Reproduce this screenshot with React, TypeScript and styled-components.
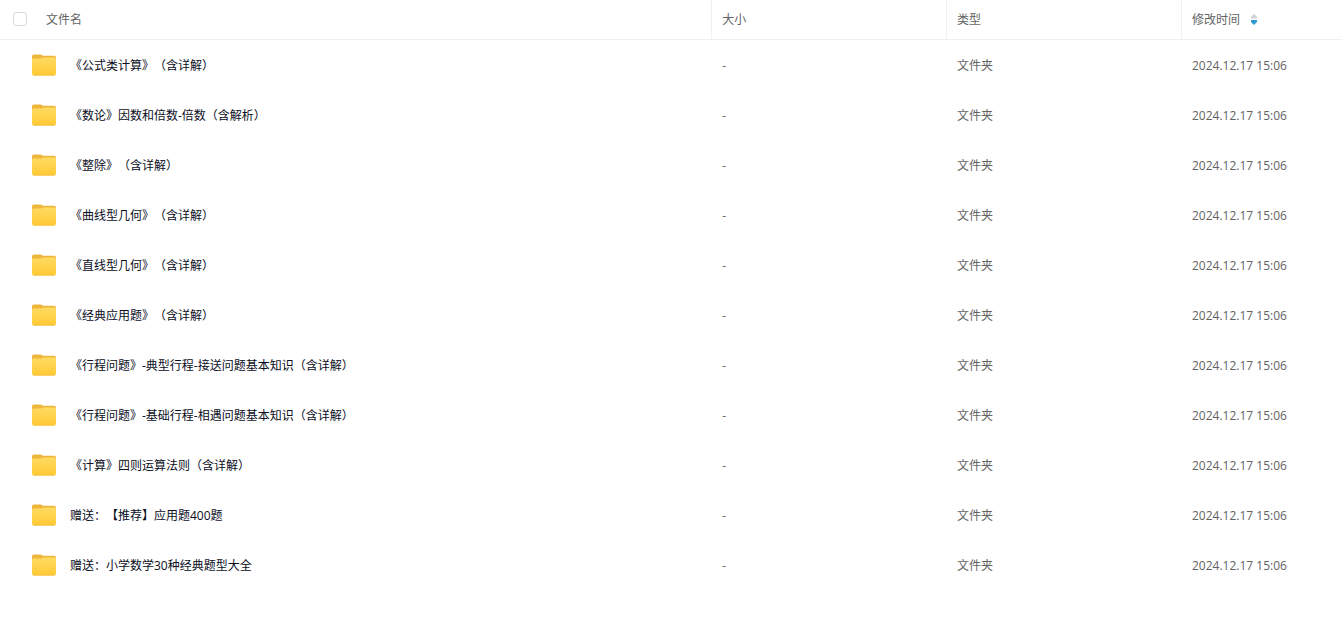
import React from "react";
import styled, { createGlobalStyle } from "styled-components";

const GlobalStyle = createGlobalStyle`
  body {
    margin: 0;
    background: #fff;
    color: #636363;
    font-family: "Open Sans", "Noto Sans CJK SC", sans-serif;
    font-size: 12px;
    line-height: 18px;
    text-spacing-trim: space-all;
  }
`;

const FileTable = styled.table`
  width: 100%;
  table-layout: fixed;
  border-collapse: separate;
  border-spacing: 0;
`;

const Column = styled.col<{ $share: string }>`
  width: ${(p) => p.$share};
`;

const HeadCell = styled.th<{ $first?: boolean }>`
  box-sizing: border-box;
  height: 40px;
  padding: 0 ${(p) => (p.$first ? "12px" : "10px")};
  border-bottom: 1px solid #f0f0f0;
  border-left: ${(p) => (p.$first ? "0" : "1px solid #f0f0f0")};
  font-weight: 400;
  text-align: left;
  white-space: nowrap;
`;

const HeadContent = styled.div`
  display: flex;
  align-items: center;
`;

const Tick = styled.input`
  appearance: none;
  box-sizing: border-box;
  width: 14px;
  height: 14px;
  margin: 0 19px 1px 1px;
  border: 1px solid #d9d9d9;
  border-radius: 3px;
  background: #fff;
  &:checked {
    background: #2f9ad0;
  }
`;

const SortButton = styled.button`
  display: flex;
  align-items: center;
  gap: 10px;
  padding: 0;
  border: 0;
  background: none;
  color: inherit;
  font: inherit;
  cursor: pointer;
`;

const Cell = styled.td`
  box-sizing: border-box;
  height: 50px;
  padding: 2px 11px 0;
  white-space: nowrap;
`;

const NameCell = styled(Cell)`
  padding: 2px 12px 0 31px;
`;

const FileLink = styled.a`
  display: flex;
  align-items: center;
  gap: 13px;
  color: #0a0d1c;
  text-decoration: none;
`;

const FolderIcon = () => (
  <svg width="26" height="26" viewBox="0 0 26 26" aria-hidden="true">
    <defs>
      <linearGradient id="folder-front" x1="0" y1="0" x2="0" y2="1">
        <stop offset="0" stopColor="#ffdb62" />
        <stop offset="1" stopColor="#ffc935" />
      </linearGradient>
    </defs>
    <path
      d="M1 3.5Q1 1.5 3 1.5H9.2Q10.2 1.5 11 2.1L12 2.7H23Q25 2.7 25 4.7V12H1Z"
      fill="#edb63c"
    />
    <path
      d="M1 7.2Q1 5.6 2.6 5.6H9.6Q10.6 5.6 11.4 5.1L12 4.8Q12.5 4.5 13.4 4.5H23.2Q25 4.5 25 6.3V20.6Q25 22.6 23 22.6H3Q1 22.6 1 20.6Z"
      fill="url(#folder-front)"
    />
    <path d="M2.5 22.2H23.5" stroke="#f3bc35" strokeWidth="1" strokeLinecap="round" opacity="0.6" />
  </svg>
);

const SortIcon = () => (
  <svg width="8" height="14" viewBox="0 0 8 14" aria-hidden="true">
    <path d="M4 1L7 4V5.5H1V4Z" fill="#cfd2d6" />
    <path d="M1 7H7V9L4 12L1 9Z" fill="#2f9ad0" />
  </svg>
);

const folders = [
  "《公式类计算》（含详解）",
  "《数论》因数和倍数-倍数（含解析）",
  "《整除》（含详解）",
  "《曲线型几何》（含详解）",
  "《直线型几何》（含详解）",
  "《经典应用题》（含详解）",
  "《行程问题》-典型行程-接送问题基本知识（含详解）",
  "《行程问题》-基础行程-相遇问题基本知识（含详解）",
  "《计算》四则运算法则（含详解）",
  "赠送：【推荐】应用题400题",
  "赠送：小学数学30种经典题型大全",
];

export default function App() {
  return (
    <>
      <GlobalStyle />
      <FileTable lang="zh-CN">
        <colgroup>
          <Column $share="53%" />
          <Column $share="17.5%" />
          <Column $share="17.5%" />
          <Column $share="12%" />
        </colgroup>
        <thead>
          <tr>
            <HeadCell $first scope="col">
              <HeadContent>
                <Tick type="checkbox" id="select-all" />
                <label htmlFor="select-all">文件名</label>
              </HeadContent>
            </HeadCell>
            <HeadCell scope="col">大小</HeadCell>
            <HeadCell scope="col">类型</HeadCell>
            <HeadCell scope="col" aria-sort="descending">
              <SortButton type="button">
                修改时间
                <SortIcon />
              </SortButton>
            </HeadCell>
          </tr>
        </thead>
        <tbody>
          {folders.map((name) => (
            <tr key={name}>
              <NameCell>
                <FileLink href="#">
                  <FolderIcon />
                  <span>{name}</span>
                </FileLink>
              </NameCell>
              <Cell>-</Cell>
              <Cell>文件夹</Cell>
              <Cell>2024.12.17 15:06</Cell>
            </tr>
          ))}
        </tbody>
      </FileTable>
    </>
  );
}
